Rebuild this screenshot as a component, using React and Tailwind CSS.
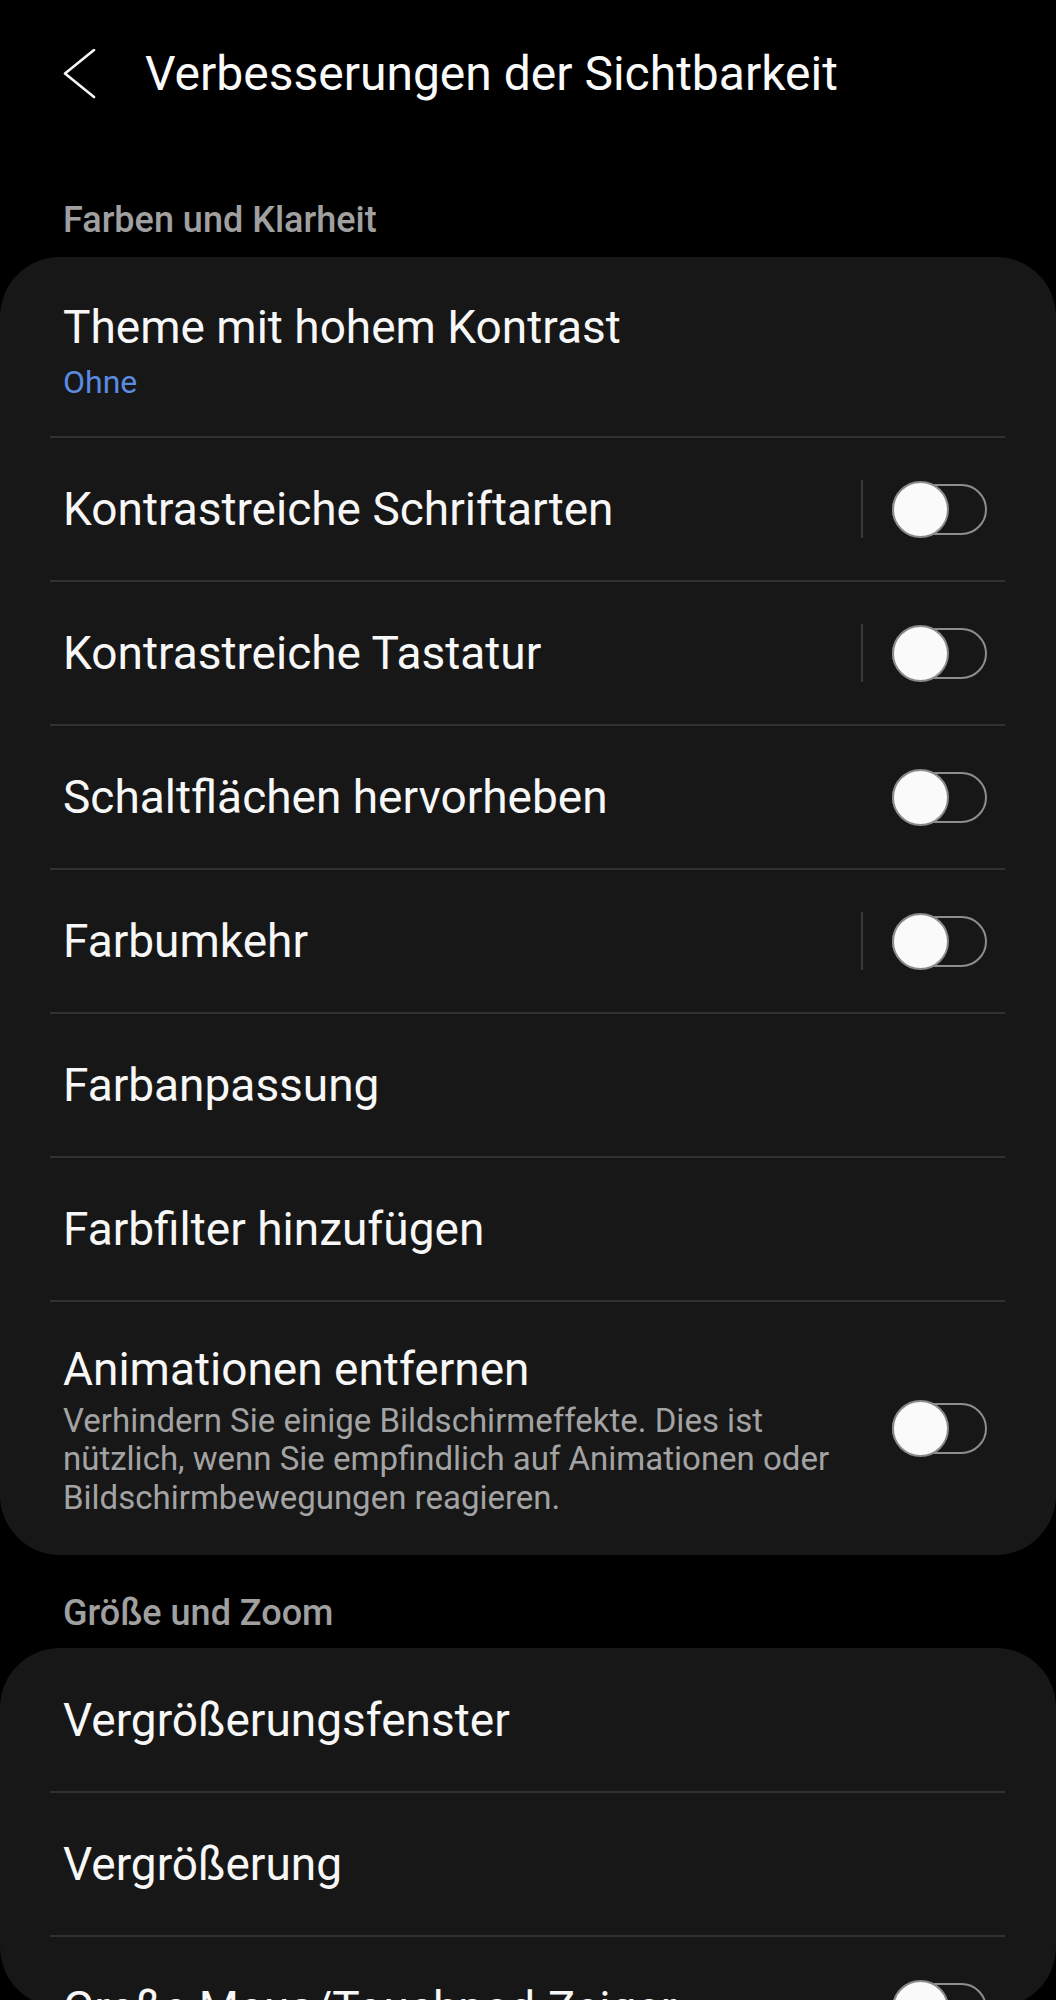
import React from "react";

function Toggle() {
  return (
    <div className="relative w-[95px] h-[57px] shrink-0">
      <div className="absolute left-0 top-[3px] w-[95px] h-[51px] rounded-full border-2 border-[#8e8e8e]" />
      <div className="absolute left-0 top-0 w-[57px] h-[57px] rounded-full bg-[#fafafa] border-2 border-[#8a8a8a]" />
    </div>
  );
}

function Divider() {
  return <div className="ml-[50px] mr-[51px] h-[2px] bg-[#313131]" />;
}

function Row({ title, toggle, sep, h = "h-[142px]" }) {
  return (
    <div className={`flex items-center pl-[63px] pr-[69px] ${h}`}>
      <div className="flex-1 text-[46px] leading-[54px] text-[#f7f7f7]">{title}</div>
      {sep && <div className="w-[2px] h-[58px] bg-[#3a3a3a] mr-[29px]" />}
      {toggle && <Toggle />}
    </div>
  );
}

function SectionHeader({ children, className }) {
  return (
    <div className={`pl-[63px] text-[36px] leading-[44px] font-medium text-[#a0a0a0] ${className}`}>
      {children}
    </div>
  );
}

export default function App() {
  return (
    <div className="relative h-[2000px] w-[1056px] overflow-hidden bg-black font-['Roboto','Noto_Sans',sans-serif]">
      {/* Header */}
      <div className="flex items-center pt-[46px] h-[102px]">
        <div className="w-[145px] flex pl-[63px]">
          <svg width="34" height="50" viewBox="0 0 34 50" fill="none">
            <path d="M31 1 L2 24.5 L31 48" stroke="#f5f5f5" strokeWidth="2.6" strokeLinecap="round" strokeLinejoin="round" />
          </svg>
        </div>
        <div className="text-[48px] leading-[56px] text-[#fafafa]">Verbesserungen der Sichtbarkeit</div>
      </div>

      <SectionHeader className="mt-[96px]">Farben und Klarheit</SectionHeader>

      {/* Card 1 */}
      <div className="mt-[15px] bg-[#171717] rounded-[60px]">
        <div className="h-[179px] pl-[63px] pt-[43px]">
          <div className="text-[46px] leading-[54px] text-[#f7f7f7]">Theme mit hohem Kontrast</div>
          <div className="mt-[9px] text-[32px] leading-[38px] text-[#5a8be0]">Ohne</div>
        </div>
        <Divider />
        <Row title="Kontrastreiche Schriftarten" toggle sep />
        <Divider />
        <Row title="Kontrastreiche Tastatur" toggle sep />
        <Divider />
        <Row title="Schaltflächen hervorheben" toggle />
        <Divider />
        <Row title="Farbumkehr" toggle sep />
        <Divider />
        <Row title="Farbanpassung" />
        <Divider />
        <Row title="Farbfilter hinzufügen" />
        <Divider />
        <div className="h-[253px] flex items-center pl-[63px] pr-[69px]">
          <div className="w-[790px] pt-[2px]">
            <div className="text-[46px] leading-[54px] text-[#f7f7f7]">Animationen entfernen</div>
            <div className="mt-[6px] text-[33px] leading-[38.5px] text-[#a3a3a3]">
              Verhindern Sie einige Bildschirmeffekte. Dies ist nützlich, wenn Sie empfindlich auf Animationen oder Bildschirmbewegungen reagieren.
            </div>
          </div>
          <div className="flex-1" />
          <Toggle />
        </div>
      </div>

      <SectionHeader className="mt-[36px]">Größe und Zoom</SectionHeader>

      {/* Card 2 */}
      <div className="mt-[13px] bg-[#171717] rounded-[60px]">
        <Row title="Vergrößerungsfenster" h="h-[143px]" />
        <Divider />
        <Row title="Vergrößerung" />
        <Divider />
        <Row title="Große Maus/Touchpad-Zeiger" toggle />
        <Divider />
        <Row title="Sichtbarkeit der Bildschirmtastatur" />
      </div>

      {/* Screen corners */}
      <svg className="absolute left-0 bottom-0" width="60" height="53" viewBox="0 0 60 53">
        <path d="M0 0 A60 60 0 0 0 31.9 53 L0 53 Z" fill="#000" />
      </svg>
      <svg className="absolute right-0 bottom-0" width="60" height="53" viewBox="0 0 60 53">
        <path d="M60 0 A60 60 0 0 1 28.1 53 L60 53 Z" fill="#000" />
      </svg>
    </div>
  );
}
